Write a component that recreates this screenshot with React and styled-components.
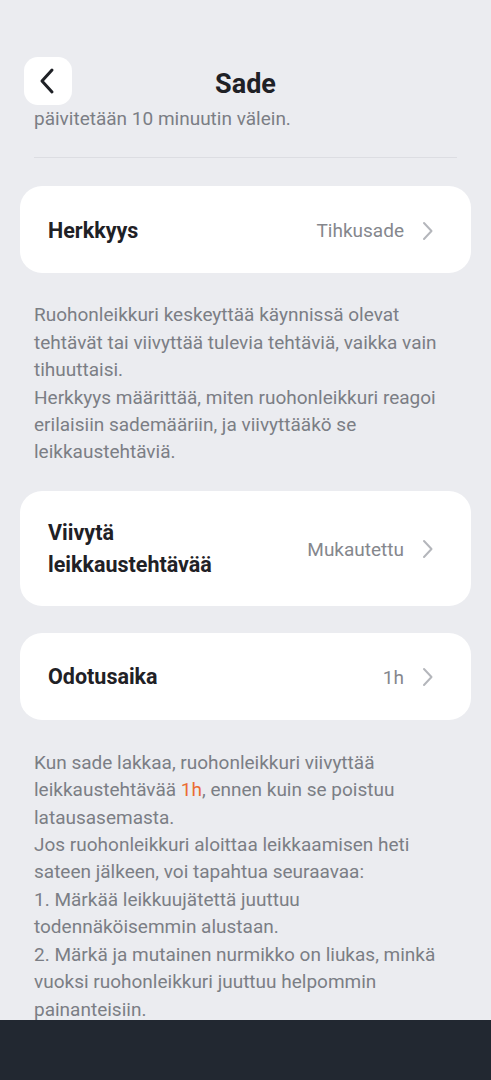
import styled, { createGlobalStyle } from "styled-components";

const GlobalStyle = createGlobalStyle`
  html, body {
    margin: 0;
    padding: 0;
    background: #ebecf0;
    font-family: Roboto, "Noto Sans", Arial, sans-serif;
  }
`;

const Screen = styled.div`
  height: 1080px;
  display: flex;
  flex-direction: column;
  background: #ebecf0;
  overflow: hidden;
`;

const Content = styled.div`
  flex: 1;
  overflow: hidden;
  padding: 58px 0 0;
`;

const Header = styled.header`
  position: relative;
  height: 48px;
  display: flex;
  align-items: center;
  justify-content: center;
  margin: -1px 24px 0;
`;

const BackButton = styled.button`
  position: absolute;
  left: 0;
  top: 0;
  width: 48px;
  height: 48px;
  border: none;
  border-radius: 14px;
  background: #fff;
  display: flex;
  align-items: center;
  justify-content: center;
  padding: 0;
`;

const Title = styled.h1`
  margin: 5px 0 0;
  font-size: 27px;
  font-weight: 700;
  color: #1f2126;
`;

const Section = styled.div`
  padding: 0 34px;
`;

const Note = styled.p`
  margin: 0;
  font-size: 19px;
  line-height: 27.4px;
  color: #7b7e85;
  white-space: pre-line;
`;

const Divider = styled.hr`
  border: none;
  border-top: 1px solid #dcdde2;
  margin: 25px 0 28px;
`;

const Card = styled.div`
  margin: 0 20px;
  background: #fff;
  border-radius: 22px;
  min-height: ${({ $tall }) => ($tall ? 115 : 87)}px;
  padding: 2px 37px 0 28px;
  display: flex;
  align-items: center;
  gap: 16px;
  box-sizing: border-box;
`;

const CardTitle = styled.div`
  flex: 1;
  font-size: 21.5px;
  line-height: 32px;
  font-weight: 700;
  color: #1f2126;
`;

const CardValue = styled.div`
  display: flex;
  align-items: center;
  gap: 16px;
  font-size: 19px;
  color: #85878d;
`;

const Gap = styled.div`
  height: ${({ $h }) => $h}px;
`;

const Accent = styled.span`
  color: #ea6c33;
`;

const NavBar = styled.div`
  height: 60px;
  flex-shrink: 0;
  background: #222831;
`;

function Chevron() {
  return (
    <svg width="14" height="22" viewBox="0 0 14 22" fill="none">
      <path d="M4 3l7.5 8-7.5 8" stroke="#b4b6bb" strokeWidth="2" strokeLinecap="round" strokeLinejoin="round" />
    </svg>
  );
}

function Row({ title, value, tall }) {
  return (
    <Card $tall={tall}>
      <CardTitle>{title}</CardTitle>
      <CardValue>
        {value}
        <Chevron />
      </CardValue>
    </Card>
  );
}

export default function App() {
  return (
    <Screen>
      <GlobalStyle />
      <Content>
        <Header>
          <BackButton aria-label="Takaisin">
            <svg width="24" height="28" viewBox="0 0 24 28" fill="none">
              <path d="M16 3L6 14l10 11" stroke="#1f2126" strokeWidth="3" strokeLinecap="round" strokeLinejoin="round" />
            </svg>
          </BackButton>
          <Title>Sade</Title>
        </Header>
        <Section>
          <Note>päivitetään 10 minuutin välein.</Note>
          <Divider />
        </Section>

        <Row title="Herkkyys" value="Tihkusade" />
        <Gap $h={28} />
        <Section>
          <Note>
            Ruohonleikkuri keskeyttää käynnissä olevat tehtävät tai viivyttää tulevia tehtäviä, vaikka vain tihuuttaisi.
            {"\n"}Herkkyys määrittää, miten ruohonleikkuri reagoi erilaisiin sademääriin, ja viivyttääkö se leikkaustehtäviä.
          </Note>
        </Section>
        <Gap $h={25} />
        <Row title={<>Viivytä<br />leikkaustehtävää</>} value="Mukautettu" tall />
        <Gap $h={27} />
        <Row title="Odotusaika" value="1h" />
        <Gap $h={29} />
        <Section>
          <Note>
            Kun sade lakkaa, ruohonleikkuri viivyttää leikkaustehtävää <Accent>1h</Accent>, ennen kuin se poistuu latausasemasta.
            {"\n"}Jos ruohonleikkuri aloittaa leikkaamisen heti sateen jälkeen, voi tapahtua seuraavaa:
            {"\n"}1. Märkää leikkuujätettä juuttuu todennäköisemmin alustaan.
            {"\n"}2. Märkä ja mutainen nurmikko on liukas, minkä vuoksi ruohonleikkuri juuttuu helpommin painanteisiin.
          </Note>
        </Section>
      </Content>
      <NavBar />
    </Screen>
  );
}
